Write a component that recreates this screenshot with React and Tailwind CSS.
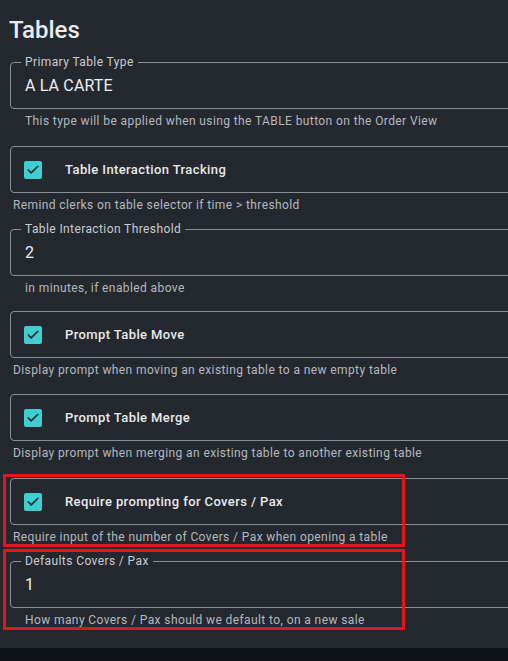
import { Check } from "lucide-react";

const FONT = { fontFamily: "Roboto, 'Liberation Sans', sans-serif" };

function CampoTexto({ label, value, ayuda }) {
  return (
    <div>
      <fieldset className="w-[560px] border border-[#8b9097] rounded-[4px] pl-[14px] pr-3 pb-[10px]">
        <legend className="ml-[-4px] px-[4px] text-[12px] leading-4 text-[#c9ccd1] tracking-[0.4px]">{label}</legend>
        <div className="pt-[4px] text-[16px] leading-6 text-[#eef0f2] tracking-[0.15px]">{value}</div>
      </fieldset>
      <p className="mt-[2px] ml-[15px] text-[12px] leading-5 text-[#b4b8bd] tracking-[0.4px]">{ayuda}</p>
    </div>
  );
}

function CampoCheck({ label, ayuda }) {
  return (
    <div>
      <div className="w-[560px] h-[47px] border border-[#8b9097] rounded-[4px] flex items-center pl-[13px]">
        <span className="w-[18px] h-[18px] rounded-[2px] bg-[#3fcfd0] flex items-center justify-center">
          <Check size={14} strokeWidth={3} className="text-[#1c2a33]" />
        </span>
        <span className="ml-[23px] text-[13px] font-medium text-[#e8eaec] tracking-[0.4px]">{label}</span>
      </div>
      <p className="mt-[2px] ml-[3px] text-[12px] leading-5 text-[#b4b8bd] tracking-[0.4px]">{ayuda}</p>
    </div>
  );
}

export default function App() {
  return (
    <div className="w-[508px] h-[661px] overflow-hidden bg-[#0f1318] flex flex-col" style={FONT}>
      <div className="h-[648px] shrink-0 bg-[#242930] pl-[10px]">
        <h1 className="pt-[16px] ml-[-1px] text-[24px] leading-7 font-medium text-[#e9ebee]">Tables</h1>
        <div className="mt-[10px]">
          <CampoTexto label="Primary Table Type" value="A LA CARTE" ayuda="This type will be applied when using the TABLE button on the Order View" />
        </div>
        <div className="mt-[15px]">
          <CampoCheck label="Table Interaction Tracking" ayuda="Remind clerks on table selector if time > threshold" />
        </div>
        <div className="mt-[6px]">
          <CampoTexto label="Table Interaction Threshold" value="2" ayuda="in minutes, if enabled above" />
        </div>
        <div className="mt-[13px]">
          <CampoCheck label="Prompt Table Move" ayuda="Display prompt when moving an existing table to a new empty table" />
        </div>
        <div className="mt-[14px]">
          <CampoCheck label="Prompt Table Merge" ayuda="Display prompt when merging an existing table to another existing table" />
        </div>
        <div className="mt-[15px] relative">
          <CampoCheck label="Require prompting for Covers / Pax" ayuda="Require input of the number of Covers / Pax when opening a table" />
          <div className="absolute left-[-7px] top-[-4px] w-[402px] h-[73px] border-[3px] border-[#e3161b] rounded-[1px]" />
        </div>
        <div className="mt-[6px] relative">
          <CampoTexto label="Defaults Covers / Pax" value="1" ayuda="How many Covers / Pax should we default to, on a new sale" />
          <div className="absolute left-[-7px] top-[-4px] w-[402px] h-[81px] border-[3px] border-[#e3161b] rounded-[1px]" />
        </div>
      </div>
    </div>
  );
}
